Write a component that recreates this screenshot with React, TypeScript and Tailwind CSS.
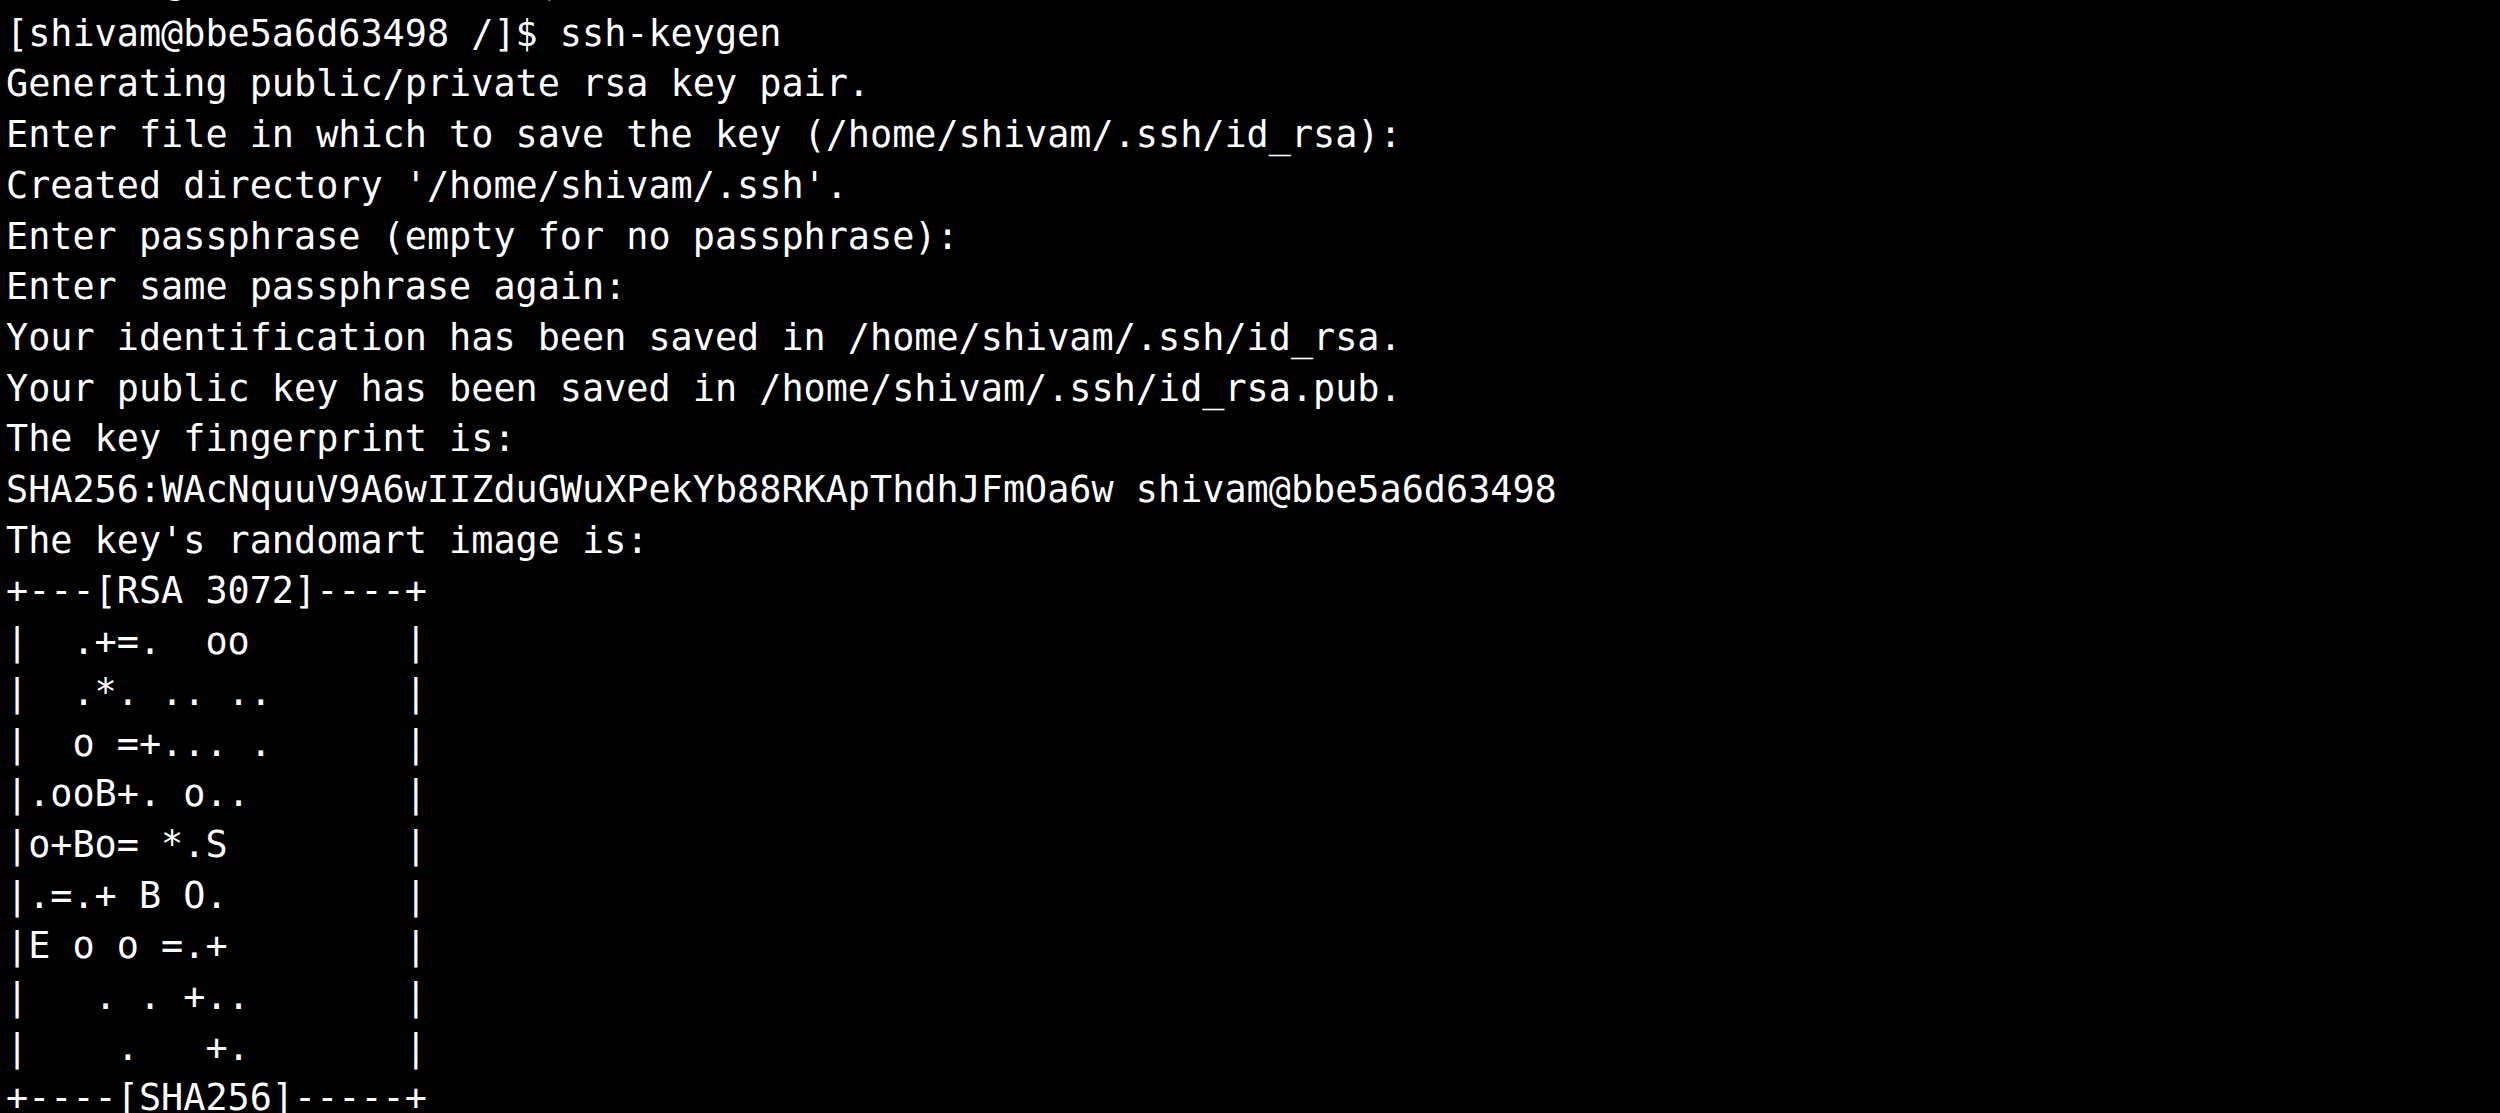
const lines = [
  "shivam @bbe5a6d63498    $ ",
  "[shivam@bbe5a6d63498 /]$ ssh-keygen",
  "Generating public/private rsa key pair.",
  "Enter file in which to save the key (/home/shivam/.ssh/id_rsa):",
  "Created directory '/home/shivam/.ssh'.",
  "Enter passphrase (empty for no passphrase):",
  "Enter same passphrase again:",
  "Your identification has been saved in /home/shivam/.ssh/id_rsa.",
  "Your public key has been saved in /home/shivam/.ssh/id_rsa.pub.",
  "The key fingerprint is:",
  "SHA256:WAcNquuV9A6wIIZduGWuXPekYb88RKApThdhJFmOa6w shivam@bbe5a6d63498",
  "The key's randomart image is:",
  "+---[RSA 3072]----+",
  "|  .+=.  oo       |",
  "|  .*. .. ..      |",
  "|  o =+... .      |",
  "|.ooB+. o..       |",
  "|o+Bo= *.S        |",
  "|.=.+ B O.        |",
  "|E o o =.+        |",
  "|   . . +..       |",
  "|    .   +.       |",
  "+----[SHA256]-----+",
];

export default function App() {
  return (
    <div className="h-[1113px] w-full overflow-hidden bg-black">
      <pre className="-mt-[42px] pl-[6px] font-['DejaVu_Sans_Mono',monospace] text-[36.8px] leading-[50.7px] text-white">
        {lines.map((line, i) => (
          <div key={i} className="whitespace-pre">
            {line}
          </div>
        ))}
      </pre>
    </div>
  );
}
